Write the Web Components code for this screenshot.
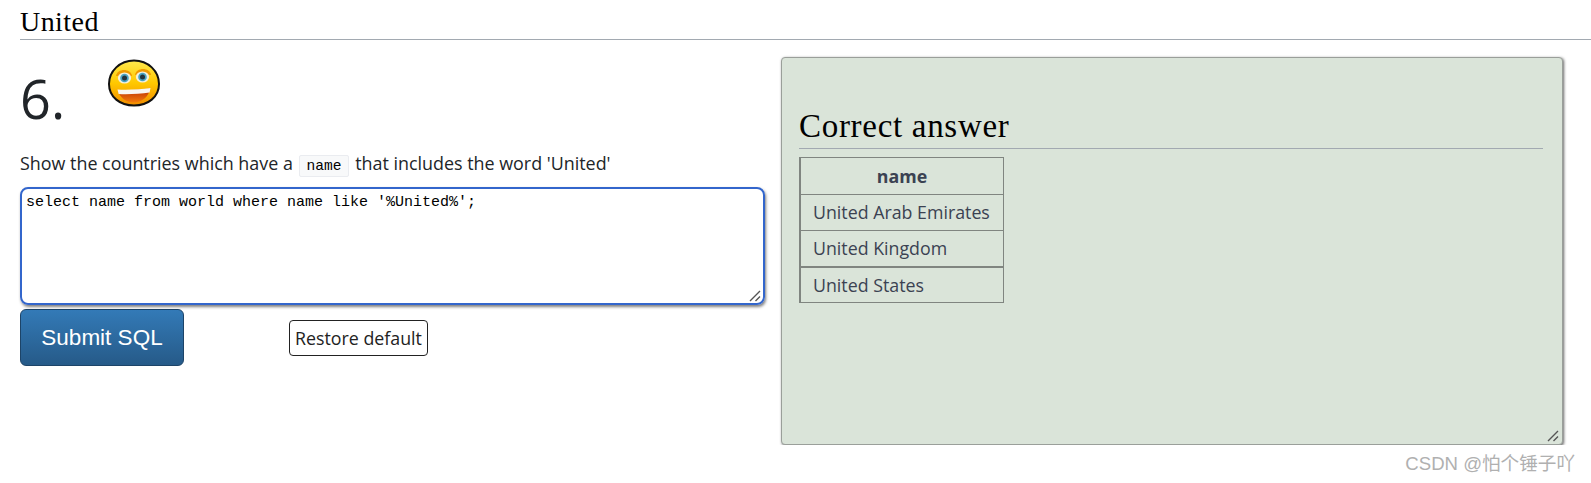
<!DOCTYPE html>
<html lang="en">
<head>
<meta charset="utf-8">
<title>United</title>
<style>
  html, body { margin: 0; background: #fff; }
  body { font-family: "Open Sans", sans-serif; color: #212529; }
</style>
</head>
<body>
<quiz-page>
  <quiz-heading slot="heading">United</quiz-heading>
  <quiz-question slot="question" number="6.">
    Show the countries which have a <code-word>name</code-word> that includes the word 'United'
  </quiz-question>
  <sql-editor slot="question">select name from world where name like '%United%';</sql-editor>
  <answer-panel slot="answer" title="Correct answer">
    <answer-table column="name">
      <answer-row>United Arab Emirates</answer-row>
      <answer-row>United Kingdom</answer-row>
      <answer-row heavy>United States</answer-row>
    </answer-table>
  </answer-panel>
</quiz-page>
<water-mark>CSDN @怕个锤子吖</water-mark>

<script>
const GRIP = `<svg class="grip" width="12" height="12" viewBox="0 0 12 12" aria-hidden="true">
  <path d="M1 11 L11 1 M6.5 11 L11 6.5" stroke="#555" stroke-width="1.4" fill="none"/>
</svg>`;

class QuizPage extends HTMLElement {
  connectedCallback() {
    this.attachShadow({ mode: "open" });
    this.shadowRoot.innerHTML = /*HTML*/ `
    <style>
      :host { display: block; padding-left: 20px; }
      .cols { display: grid; grid-template-columns: 745px 782px; column-gap: 16px; }
    </style>
    <slot name="heading"></slot>
    <div class="cols">
      <div><slot name="question"></slot></div>
      <div><slot name="answer"></slot></div>
    </div>`;
  }
}

class QuizHeading extends HTMLElement {
  connectedCallback() {
    this.attachShadow({ mode: "open" });
    this.shadowRoot.innerHTML = /*HTML*/ `
    <style>
      :host {
        display: block;
        height: 39px;
        margin-bottom: 16px;
        border-bottom: 1px solid #a2a9b1;
        font: 28px/43px "Liberation Serif", serif;
        letter-spacing: .45px;
        color: #000;
      }
    </style>
    <slot></slot>`;
  }
}

class QuizQuestion extends HTMLElement {
  connectedCallback() {
    this.attachShadow({ mode: "open" });
    this.shadowRoot.innerHTML = /*HTML*/ `
    <style>
      :host { display: block; }
      .top { display: flex; height: 90px; align-items: flex-start; }
      .num { font-size: 54px; line-height: 84px; font-weight: 400; width: 87px; }
      svg { margin-top: 3px; }
      p { margin: 0 0 11px; font-size: 17.9px; line-height: 26px; height: 26px; padding-top: 4px; white-space: nowrap; }
    </style>
    <div class="top">
      <div class="num">${this.getAttribute("number")}</div>
      <svg width="54" height="48" viewBox="0 0 54 48" aria-hidden="true">
        <defs>
          <linearGradient id="face" x1="0" y1="0" x2="0" y2="1">
            <stop offset="0" stop-color="#ffe94d"/>
            <stop offset=".5" stop-color="#ffc800"/>
            <stop offset="1" stop-color="#f08c00"/>
          </linearGradient>
          <linearGradient id="mouth" x1="0" y1="0" x2="0" y2="1">
            <stop offset="0" stop-color="#b82c04"/>
            <stop offset="1" stop-color="#f47c0c"/>
          </linearGradient>
        </defs>
        <path d="M27 1.5 C41 1.5 52 12 52 25 C52 38 41 46.5 27 46.5 C13 46.5 2 38 2 25 C2 12 13 1.5 27 1.5 Z" fill="url(#face)" stroke="#111" stroke-width="2"/>
        <path d="M9 17 C10 9 24 9 25 17 Z" fill="#f09a00"/>
        <path d="M28 16 C29 8 43 8 44 16 Z" fill="#f09a00"/>
        <ellipse cx="17.5" cy="19" rx="6.6" ry="5.6" fill="#f4f0dc"/>
        <ellipse cx="35.5" cy="18" rx="6.6" ry="5.6" fill="#f4f0dc"/>
        <circle cx="17.5" cy="19" r="4.3" fill="#4aa3c4"/>
        <circle cx="35.5" cy="18" r="4.3" fill="#4aa3c4"/>
        <circle cx="17.5" cy="19" r="2.5" fill="#24333c"/>
        <circle cx="35.5" cy="18" r="2.5" fill="#24333c"/>
        <path d="M11 31 C20 31.5 34 31 43 29.5 C42 38 34 43.5 27 43.5 C19 43.5 12 38 11 31 Z" fill="url(#mouth)"/>
        <path d="M10.5 30.5 C20 31 34 30.5 43.5 29 L42.6 33.5 C33 35 20 35.5 11.6 35 Z" fill="#f8f6f2"/>
      </svg>
    </div>
    <p><slot></slot></p>`;
  }
}

class CodeWord extends HTMLElement {
  connectedCallback() {
    this.attachShadow({ mode: "open" });
    this.shadowRoot.innerHTML = /*HTML*/ `
    <style>
      :host {
        display: inline-block;
        padding: 0 6px;
        margin: 0 2px;
        border: 1px solid #eaecf0;
        border-radius: 2px;
        background: #f8f9fa;
        font: 14.6px/20px "Liberation Mono", monospace;
        color: #000;
      }
    </style>
    <slot></slot>`;
  }
}

class SqlEditor extends HTMLElement {
  connectedCallback() {
    this.attachShadow({ mode: "open" });
    this.shadowRoot.innerHTML = /*HTML*/ `
    <style>
      :host { display: block; }
      .box {
        position: relative;
        box-sizing: border-box;
        height: 118px;
        padding: 5px 4px;
        border: 2px solid #3366cc;
        border-radius: 8px;
        box-shadow: 1px 2px 3px rgba(0, 0, 0, .5);
        font: 15px/18px "Liberation Mono", monospace;
        color: #000;
        white-space: pre;
      }
      .grip { position: absolute; right: 2px; bottom: 1px; }
      .btns { display: flex; align-items: center; margin-top: 4px; }
      .submit {
        box-sizing: border-box;
        width: 164px;
        height: 57px;
        border: 1px solid #1d4468;
        border-radius: 6px;
        background: linear-gradient(#337ab7, #265a88);
        color: #fff;
        font: 22.5px "Liberation Sans", sans-serif;
        padding: 0;
      }
      .restore {
        box-sizing: border-box;
        width: 139px;
        height: 36px;
        margin: 1px 0 0 105px;
        border: 1px solid #222;
        border-radius: 4px;
        background: #fff;
        color: #222;
        font: 17.8px "Open Sans", sans-serif;
        padding: 0;
      }
    </style>
    <div class="box"><slot></slot>${GRIP}</div>
    <div class="btns">
      <button class="submit">Submit SQL</button>
      <button class="restore">Restore default</button>
    </div>`;
  }
}

class AnswerPanel extends HTMLElement {
  connectedCallback() {
    this.attachShadow({ mode: "open" });
    this.shadowRoot.innerHTML = /*HTML*/ `
    <style>
      :host {
        display: block;
        position: relative;
        box-sizing: border-box;
        height: 388px;
        margin-top: 1px;
        padding: 46px 19px 0 17px;
        border: 1px solid #9a9f9a;
        border-radius: 4px;
        background: #dae4d9;
        box-shadow: 1px 1px 3px rgba(0, 0, 0, .6);
      }
      h2 {
        margin: 0 0 8px;
        height: 44px;
        border-bottom: 1px solid #a2a9b1;
        font: 400 33px/44px "Liberation Serif", serif;
        letter-spacing: .7px;
        color: #000;
      }
      .grip { position: absolute; right: 3px; bottom: 2px; }
    </style>
    <h2>${this.getAttribute("title")}</h2>
    <slot></slot>
    ${GRIP}`;
  }
}

class AnswerTable extends HTMLElement {
  connectedCallback() {
    this.attachShadow({ mode: "open" });
    this.shadowRoot.innerHTML = /*HTML*/ `
    <style>
      :host {
        display: block;
        width: 205px;
        box-sizing: border-box;
        border: 1px solid #808580;
        border-left-width: 2px;
        color: #3b4252;
        font-size: 17.8px;
      }
      .th { height: 36px; line-height: 36px; text-align: center; font-weight: 700; }
    </style>
    <div class="th">${this.getAttribute("column")}</div>
    <slot></slot>`;
  }
}

class AnswerRow extends HTMLElement {
  connectedCallback() {
    this.attachShadow({ mode: "open" });
    const top = this.hasAttribute("heavy") ? 2 : 1;
    this.shadowRoot.innerHTML = /*HTML*/ `
    <style>
      :host {
        display: block;
        height: ${36 - top}px;
        line-height: ${36 - top}px;
        padding-left: 12px;
        border-top: ${top}px solid #808580;
      }
    </style>
    <slot></slot>`;
  }
}

class WaterMark extends HTMLElement {
  connectedCallback() {
    this.attachShadow({ mode: "open" });
    this.shadowRoot.innerHTML = /*HTML*/ `
    <style>
      :host {
        position: absolute;
        right: 16px;
        top: 452px;
        font: 18.6px/24px "Liberation Sans", "Noto Sans CJK SC", sans-serif;
        color: #b0b0b0;
      }
    </style>
    <slot></slot>`;
  }
}

customElements.define("quiz-page", QuizPage);
customElements.define("quiz-heading", QuizHeading);
customElements.define("quiz-question", QuizQuestion);
customElements.define("code-word", CodeWord);
customElements.define("sql-editor", SqlEditor);
customElements.define("answer-panel", AnswerPanel);
customElements.define("answer-table", AnswerTable);
customElements.define("answer-row", AnswerRow);
customElements.define("water-mark", WaterMark);
</script>
</body>
</html>
